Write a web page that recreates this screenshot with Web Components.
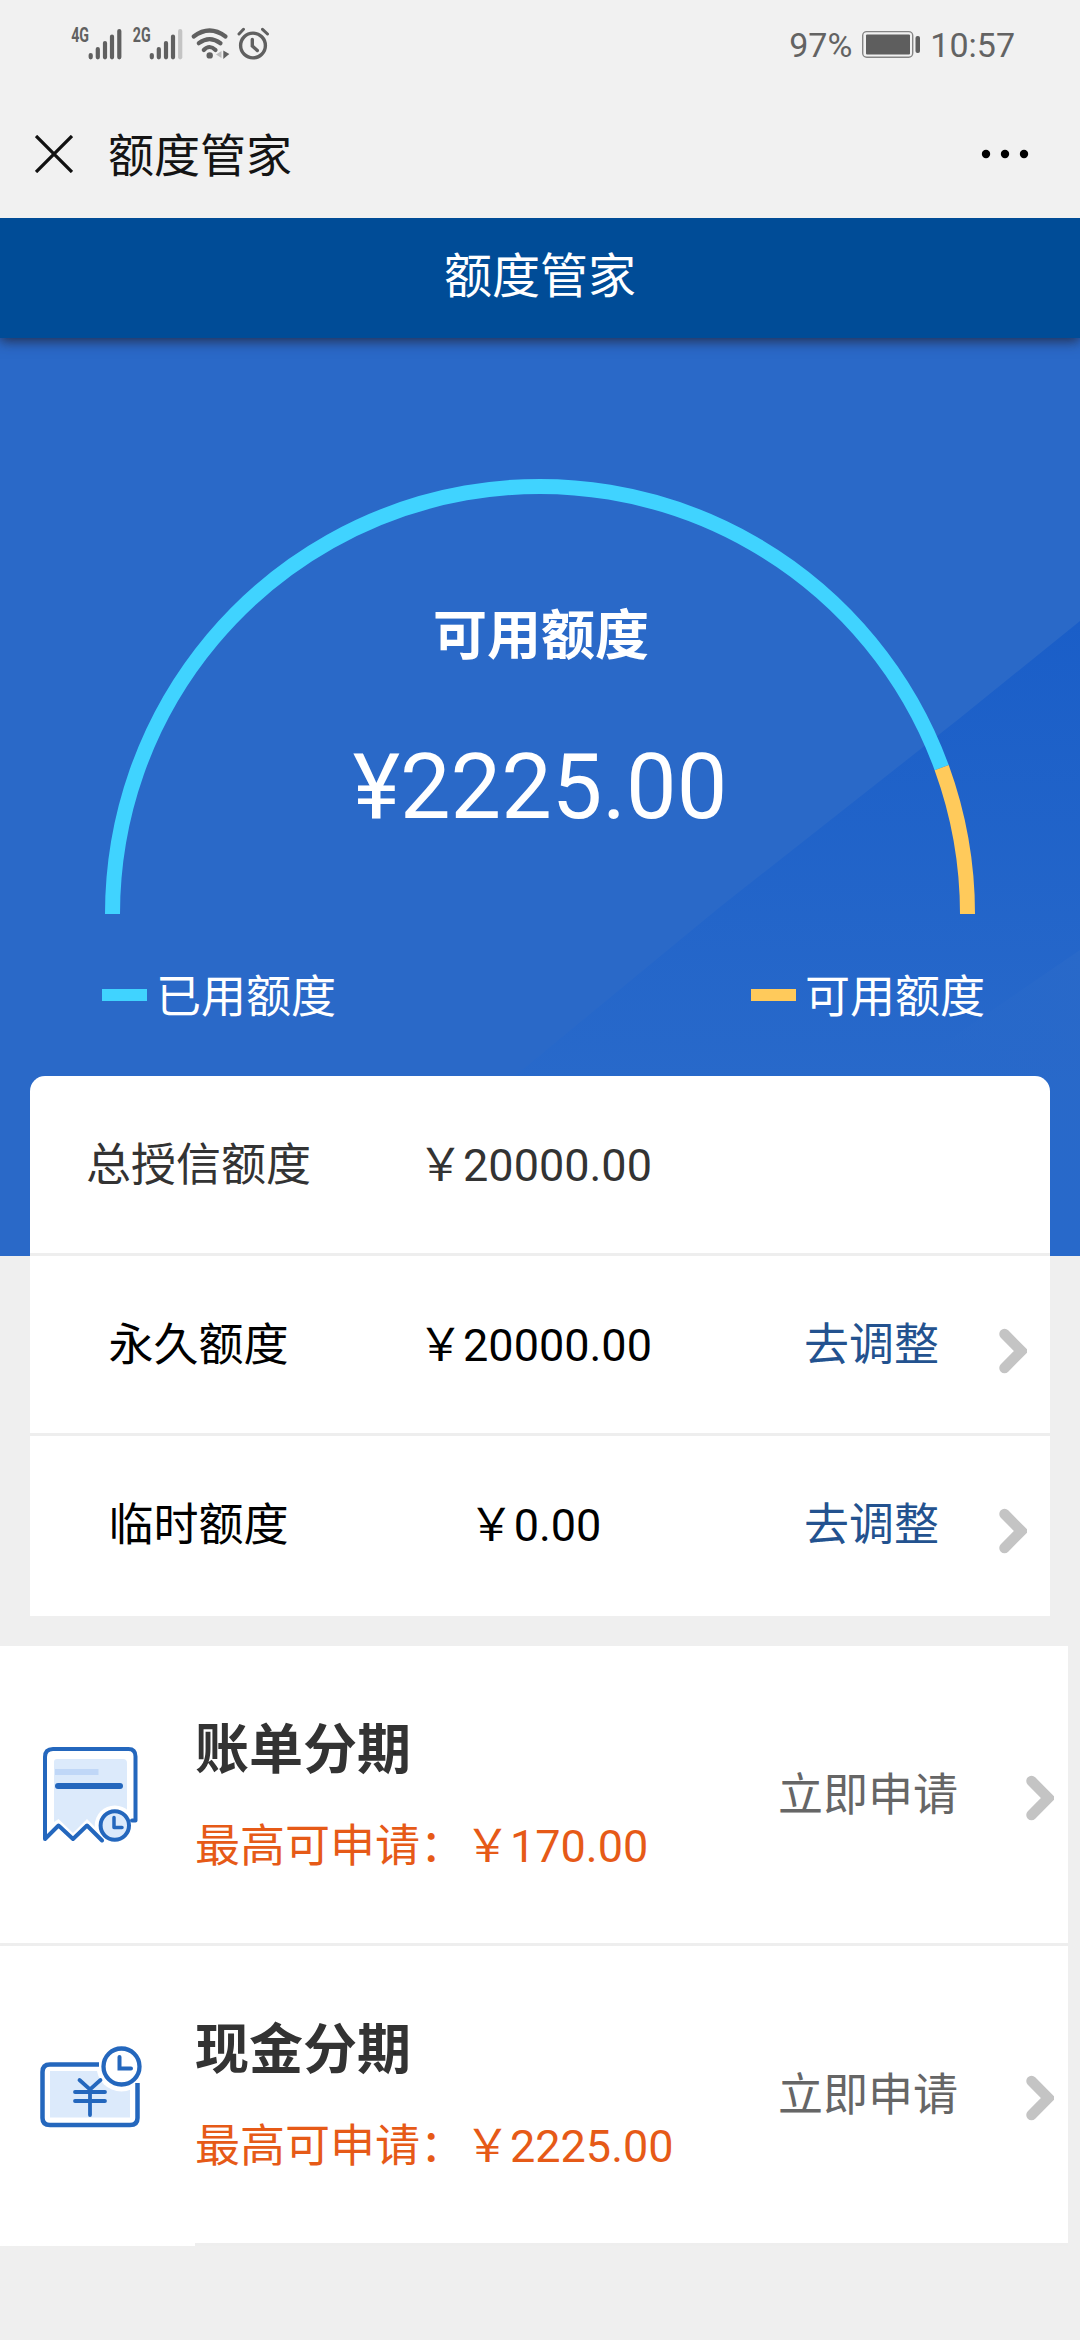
<!DOCTYPE html>
<html lang="zh-CN">
<head>
<meta charset="utf-8">
<title>额度管家</title>
<style>
html,body{margin:0;padding:0}
body{width:1080px;height:2340px;background:#efefef;font-family:Roboto,"Noto Sans CJK SC",sans-serif;overflow:hidden}
</style>
</head>
<body>
<quota-app></quota-app>
<script>
const define = (name, html) => {
  const tpl = document.createElement('template');
  tpl.innerHTML = html;
  customElements.define(name, class extends HTMLElement {
    constructor() {
      super();
      this.attachShadow({ mode: 'open' }).append(tpl.content.cloneNode(true));
    }
  });
};

define('status-bar', `
<style>
:host{display:flex;height:90px;box-sizing:border-box;padding:0 65px 0 66px;justify-content:space-between;color:#636363;font-size:34px;line-height:40px}
.right{display:flex;padding-top:25px}
.right svg{margin:5px 9px 0 9px}
span{white-space:nowrap}
</style>
<svg width="210" height="70" viewBox="66 0 210 70" fill="#606060">
  <g font-family="Roboto" font-weight="700" font-size="19.5">
    <text transform="translate(71.2 42.3) scale(.73 1)">4G</text>
    <text transform="translate(132.8 42.3) scale(.73 1)">2G</text>
  </g>
  <g stroke="#606060" stroke-width="4.2" stroke-linecap="round" fill="none">
    <path d="M90.7 55v2.3M97.8 49v8.3M105 43v14.3M112 36.500v20.800M119.300 31v26.300"/>
    <path d="M151.800 55v2.3M158.800 49v8.3M166 43v14.3M173 36.500v20.800"/>
    <path d="M180.200 31v26.300" stroke="#c4c4c4"/>
    <path d="M193.700 36.500Q209.500 24.500 225.500 36.500M198.800 43.200Q209.500 35 220.500 43.200M203.800 50Q209.500 44 215.500 50"/>
  </g>
  <circle cx="209.700" cy="55.400" r="3.200"/>
  <path d="M221.500 51v7l-5.500-3.500z" fill="#bdbdbd"/><path d="M223.300 50.500l6 3.500-6 5z"/>
  <g stroke="#606060" fill="none" stroke-linecap="round">
    <circle cx="253" cy="45.500" r="12.400" stroke-width="3.400"/>
    <path d="M252.300 39.500v6.500l5 4.500" stroke-width="3.400"/>
    <path d="M239 34l4.500-4.700M262.500 29.300l5 4.700" stroke-width="3"/>
  </g>
</svg>
<div class="right"><span>97%</span>
  <svg width="60" height="30" viewBox="861 30 60 30">
    <rect x="862.700" y="31.600" width="50" height="25.700" rx="4" fill="none" stroke="#858585" stroke-width="1.400"/>
    <rect x="866" y="34.500" width="44" height="20" rx="1" fill="#5e5e5e"/>
    <rect x="915.500" y="36" width="4.500" height="17" rx="2" fill="#5e5e5e"/>
  </svg>
  <span>10:57</span></div>`);

define('nav-bar', `
<style>
:host{display:flex;height:128px;align-items:center;box-sizing:border-box;padding:0 51px 0 35px;color:#141414;font-size:46px;line-height:60px}
.t{flex:1;margin:3px 0 0 35px}
</style>
<svg width="38" height="38" style="margin-top:-1px" viewBox="0 0 38 38" stroke="#111" stroke-width="3.300"><path d="M1 1L37 37M37 1L1 37"/></svg>
<div class="t"><slot></slot></div>
<svg width="48" height="10" viewBox="0 0 48 10"><circle cx="5" cy="5" r="4.200"/><circle cx="24" cy="5" r="4.200"/><circle cx="43" cy="5" r="4.200"/></svg>`);

define('page-title', `
<style>
:host{display:block;position:relative;height:120px;box-sizing:border-box;padding-top:29px;background:#004c97;color:#fff;text-align:center;font-size:48px;line-height:60px;box-shadow:0 3px 12px rgba(35,35,55,.85)}
</style><slot></slot>`);

define('legend-item', `
<style>
:host{display:flex;align-items:center;gap:9px;color:#fff;font-size:45px;line-height:60px}
i{width:45px;height:12px;margin-bottom:7px;background:var(--mark)}
</style><i></i><span><slot></slot></span>`);

define('quota-gauge', `
<style>
:host{display:grid;height:738px;background:#2a69c8;color:#fff;text-align:center}
:host>*{grid-area:1/1}
.c{display:flex;flex-direction:column}
.label{font-size:54px;font-weight:700;line-height:70px;margin:264px 0 0 2px}
.sum{font-size:90px;line-height:110px;margin-top:61px}
.legend{display:flex;justify-content:space-between;padding:0 95px 0 102px;margin-top:125px}
</style>
<svg width="1080" height="918" viewBox="0 338 1080 918">
  <defs>
    <linearGradient id="g" x1="0" y1="621" x2="0" y2="1080" gradientUnits="userSpaceOnUse"><stop stop-color="#1a5ec8"/><stop offset="1" stop-color="#2869ca"/></linearGradient>
    <linearGradient id="h" x1="1080" y1="950" x2="900" y2="1080" gradientUnits="userSpaceOnUse"><stop stop-color="#2969c9"/><stop offset="1" stop-color="#2869ca" stop-opacity="0"/></linearGradient>
  </defs>
  <path d="M1080 621L960 718L720 907L510 1080V1256H1080Z" fill="url(#g)"/>
  <path d="M1080 950L890 1080V1256H1080Z" fill="url(#h)"/>
  <g fill="none" stroke-width="15">
    <path d="M112.500 914A427.500 427.500 0 0 1 941.660 767.600" stroke="#40d3ff"/>
    <path d="M941.660 767.600A427.500 427.500 0 0 1 967.500 914" stroke="#ffca5b"/>
  </g>
</svg>
<div class="c">
  <div class="label">可用额度</div>
  <div class="sum">¥2225.00</div>
  <div class="legend"><legend-item style="--mark:#40d3ff">已用额度</legend-item><legend-item style="--mark:#ffca5b">可用额度</legend-item></div>
</div>`);

define('arrow-icon', `
<style>:host{display:block;width:28px;height:46px}svg{display:block}</style>
<svg width="28" height="46" viewBox="0 0 28 46"><path d="M5.500 6L22.300 23L5.500 40" fill="none" stroke="#c4c4c4" stroke-width="10.500" stroke-linecap="round"/></svg>`);

define('quota-row', `
<style>
:host{display:grid;grid-template-columns:337px 336px 337px;height:180px;box-sizing:border-box;border-bottom:3px solid #eee;padding-top:2px;color:#000;font-size:45px;line-height:60px;text-align:center;align-items:center}
:host([total]){color:#333}
:host([last]){border:0;padding-bottom:3px}
.end{display:flex;align-items:center;color:#23528f}
::slotted([slot=action]){margin-left:101px}
::slotted(arrow-icon){margin:10px 0 0 60px}
</style>
<slot name="name"></slot><slot></slot><div class="end"><slot name="action"></slot><slot name="arrow"></slot></div>`);

define('quota-card', `
<style>:host{display:block;position:relative;margin:0 30px;background:#fff;border-radius:15px 15px 0 0}</style><slot></slot>`);

define('offer-row', `
<style>
:host{display:flex;height:300px;box-sizing:border-box;background:linear-gradient(#eee,#eee) 0 100%/100% 3px no-repeat #fff}
:host([last]){background-position:195px 100%}
.icon{width:195px;box-sizing:border-box;padding:92px 0 0 36px}
.text{width:583px}
.name{font-size:54px;font-weight:700;line-height:70px;color:#333;margin-top:70px}
.max{font-size:45px;line-height:60px;color:#e65a17;margin-top:31px}
.act{width:248px;font-size:45px;line-height:60px;color:#666;margin-top:120px}
arrow-icon{margin-top:129px}
</style>
<div class="icon"><slot name="icon"></slot></div>
<div class="text"><div class="name"><slot name="name"></slot></div><div class="max"><slot name="max"></slot></div></div>
<div class="act"><slot name="action"></slot></div><arrow-icon></arrow-icon>`);

define('bill-icon', `
<style>:host,svg{display:block}</style>
<svg width="112" height="112" viewBox="36 1738 112 112" fill="none" stroke="#2467bd" stroke-width="4" stroke-linejoin="round" stroke-linecap="round">
  <path d="M54 1762q0-3 3-3h66q4 0 4 4v52l-25 19-15-15-14 14-14.500-14-4.500 3z" fill="#dceafb" stroke="none"/>
  <path d="M55 1772h43.500" stroke="#c0d7f7" stroke-width="6" stroke-linecap="butt"/>
  <path d="M58 1786h62" stroke-width="6"/>
  <circle cx="114.800" cy="1825.500" r="20" fill="#fff" stroke="none"/>
  <path d="M132 1820.500h3.500V1756.500q0-7.500-7-7.500H53q-8 0-8 8V1839L58.500 1825.500L73 1839L87 1825.500L102 1840.500"/>
  <circle cx="114.800" cy="1825.500" r="14.200" fill="#dceafb"/>
  <path d="M114 1817.500v10h8" stroke-width="3.500"/>
</svg>`);

define('cash-icon', `
<style>:host,svg{display:block}</style>
<svg width="112" height="112" viewBox="36 2038 112 112" fill="none" stroke="#2467bd" stroke-width="4.500" stroke-linecap="butt">
  <path d="M50 2071h80v46.500H50z" fill="#dceafb" stroke="none"/>
  <circle cx="121.500" cy="2066.500" r="25" fill="#fff" stroke="none"/>
  <path d="M99 2064.500H50q-7.500 0-7.500 7.500v46q0 7 7.500 7h80q7.500 0 7.500-7v-35"/>
  <path d="M79.500 2080L90 2089.500L100.500 2080M90 2089.500V2115M75 2092h30M75 2101h30" stroke-width="3.800" stroke-linecap="round"/>
  <circle cx="121.500" cy="2066.500" r="18" fill="#fff" stroke-width="4.300"/>
  <path d="M119.500 2057v11.500h11.500" stroke-width="4" stroke-linecap="round"/>
</svg>`);

define('quota-app', `
<style>
:host{display:flex;flex-direction:column}
.top{background:#f1f1f1;position:relative;z-index:2}
page-title{z-index:1}
quota-card{z-index:1}
.blue{height:918px;margin-bottom:-180px}
.offers{margin:30px 12px 0 0}
</style>
<div class="top"><status-bar></status-bar><nav-bar>额度管家</nav-bar></div>
<page-title>额度管家</page-title>
<quota-gauge class="blue"></quota-gauge>
<quota-card>
  <quota-row total><span slot="name">总授信额度</span><span>￥20000.00</span></quota-row>
  <quota-row><span slot="name">永久额度</span><span>￥20000.00</span><span slot="action">去调整</span><arrow-icon slot="arrow"></arrow-icon></quota-row>
  <quota-row last><span slot="name">临时额度</span><span>￥0.00</span><span slot="action">去调整</span><arrow-icon slot="arrow"></arrow-icon></quota-row>
</quota-card>
<div class="offers">
  <offer-row><bill-icon slot="icon"></bill-icon><span slot="name">账单分期</span><span slot="max">最高可申请：￥170.00</span><span slot="action">立即申请</span></offer-row>
  <offer-row last><cash-icon slot="icon"></cash-icon><span slot="name">现金分期</span><span slot="max">最高可申请：￥2225.00</span><span slot="action">立即申请</span></offer-row>
</div>`);
</script>
</body>
</html>
